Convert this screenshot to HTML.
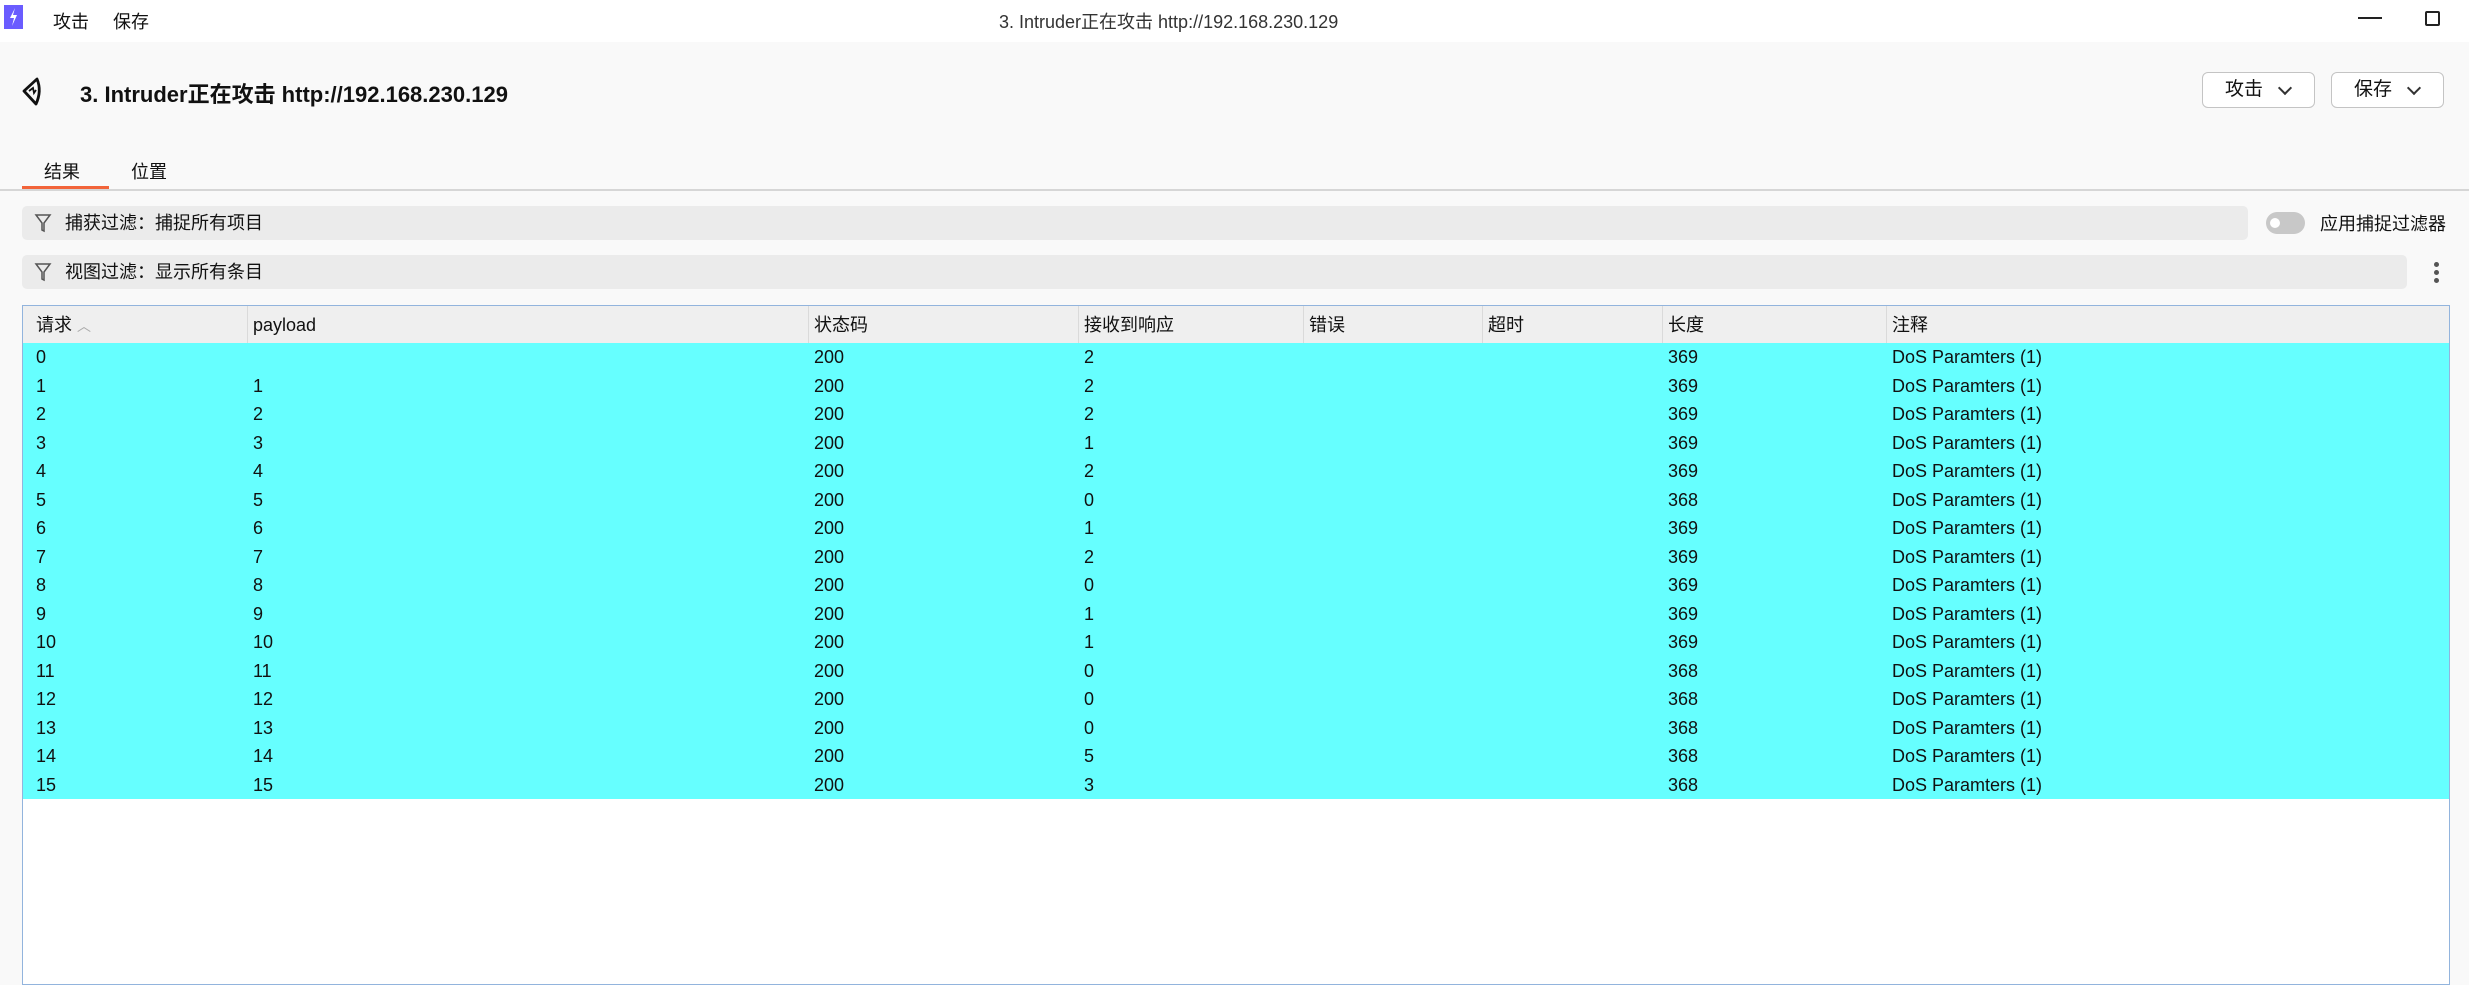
<!DOCTYPE html>
<html><head><meta charset="utf-8"><style>
*{margin:0;padding:0;box-sizing:border-box}
body{width:2469px;height:978px;overflow:hidden;background:#f9f9f9;font-family:"Liberation Sans","Noto Sans CJK SC",sans-serif;color:#111;position:relative}
.abs{position:absolute}
.tb{left:0;top:0;width:2469px;height:42px;background:#fff}
.btn{border:1.5px solid #c4c4c4;border-radius:6px;background:#fff;height:36px;top:72px;width:113px;font-size:19px;line-height:33px;padding-left:22px}
.chev{position:absolute;top:10px;right:24px;width:10px;height:10px;border-right:2px solid #333;border-bottom:2px solid #333;transform:rotate(45deg)}
.bar{background:#ebebeb;border-radius:5px;height:34px;font-size:18px;line-height:34px;padding-left:43px}
.tbl{left:22px;top:305px;width:2428px;height:680px;background:#fff;border:1.5px solid #92b4dd}
.hd{position:absolute;left:0;top:0;width:100%;height:38px;background:#efefef;border-bottom:1px solid #ddd}
.row{position:absolute;left:0;width:100%;height:28.5px;background:#66ffff}
.c{position:absolute;font-size:18px;white-space:nowrap;line-height:28px;top:0}
.hd .c{line-height:38px}
.dv{position:absolute;top:0;width:1px;height:38px;background:#dadada}
</style></head><body>
<div class="abs tb"></div>
<div class="abs" style="left:4px;top:5px;width:19px;height:24px;background:#6a5cff"></div>
<svg class="abs" style="left:4px;top:5px" width="19" height="24"><path d="M11 3 L6 13 L10 13 L8 21 L13 10 L9 10 Z" fill="#fff"/></svg>
<div class="abs" style="left:53px;top:8px;font-size:18px">攻击</div>
<div class="abs" style="left:113px;top:8px;font-size:18px">保存</div>
<div class="abs" style="left:999px;top:8px;font-size:18px;color:#333">3. Intruder正在攻击 http://192.168.230.129</div>
<div class="abs" style="left:2358px;top:17px;width:24px;height:1.5px;background:#222"></div>
<div class="abs" style="left:2425px;top:11px;width:15px;height:15px;border:2px solid #222;border-radius:2px"></div>
<svg class="abs" style="left:20px;top:76px" width="28" height="32"><path d="M17 3 L4 15 L16 28 Q22 15 17 3 Z" fill="none" stroke="#111" stroke-width="2.8" stroke-linejoin="round"/><path d="M9 15 L13 12 L14 17 L16 14" fill="none" stroke="#111" stroke-width="1.8"/></svg>
<div class="abs" style="left:80px;top:77px;font-size:22px;font-weight:bold">3. Intruder正在攻击 http://192.168.230.129</div>
<div class="abs btn" style="left:2202px">攻击<span class="chev"></span></div>
<div class="abs btn" style="left:2331px">保存<span class="chev"></span></div>
<div class="abs" style="left:44px;top:158px;font-size:18px">结果</div>
<div class="abs" style="left:131px;top:158px;font-size:18px">位置</div>
<div class="abs" style="left:0;top:189px;width:2469px;height:2px;background:#d6d6d6"></div>
<div class="abs" style="left:22px;top:186px;width:87px;height:3px;background:#f2643a"></div>
<div class="abs bar" style="left:22px;top:206px;width:2226px">捕获过滤：捕捉所有项目</div>
<svg class="abs" style="left:34px;top:213px" width="18" height="20"><path d="M2 2 H16 L10 10 V18 L8 17 V10 Z" fill="none" stroke="#555" stroke-width="1.5"/></svg>
<div class="abs" style="left:2266px;top:212px;width:39px;height:22px;border-radius:11px;background:#c8c8c8"></div>
<div class="abs" style="left:2270px;top:218px;width:10px;height:10px;border-radius:5px;background:#fff"></div>
<div class="abs" style="left:2320px;top:210px;font-size:18px">应用捕捉过滤器</div>
<div class="abs bar" style="left:22px;top:255px;width:2385px">视图过滤：显示所有条目</div>
<svg class="abs" style="left:34px;top:262px" width="18" height="20"><path d="M2 2 H16 L10 10 V18 L8 17 V10 Z" fill="none" stroke="#555" stroke-width="1.5"/></svg>
<div class="abs" style="left:2434px;top:262px;width:5px;height:5px;border-radius:3px;background:#555;box-shadow:0 8px 0 #555,0 16px 0 #555"></div>
<div class="abs tbl">
<div class="hd">
<div class="c" style="left:13px">请求 <span style="color:#aaa;font-size:14px">︿</span></div>
<div class="dv" style="left:224px"></div><div class="c" style="left:230px">payload</div>
<div class="dv" style="left:785px"></div><div class="c" style="left:791px">状态码</div>
<div class="dv" style="left:1055px"></div><div class="c" style="left:1061px">接收到响应</div>
<div class="dv" style="left:1280px"></div><div class="c" style="left:1286px">错误</div>
<div class="dv" style="left:1459px"></div><div class="c" style="left:1465px">超时</div>
<div class="dv" style="left:1639px"></div><div class="c" style="left:1645px">长度</div>
<div class="dv" style="left:1863px"></div><div class="c" style="left:1869px">注释</div>
</div>
<div id="rows"></div>
</div>
<script>
var r=[2,2,2,1,2,0,1,2,0,1,1,0,0,0,5,3],l=[369,369,369,369,369,368,369,369,369,369,369,368,368,368,368,368],h='';
for(var i=0;i<16;i++){h+='<div class="row" style="top:'+(37+i*28.5)+'px"><div class="c" style="left:13px">'+i+'</div><div class="c" style="left:230px">'+(i?i:'')+'</div><div class="c" style="left:791px">200</div><div class="c" style="left:1061px">'+r[i]+'</div><div class="c" style="left:1645px">'+l[i]+'</div><div class="c" style="left:1869px">DoS Paramters (1)</div></div>';}
document.getElementById('rows').innerHTML=h;
</script>
</body></html>
